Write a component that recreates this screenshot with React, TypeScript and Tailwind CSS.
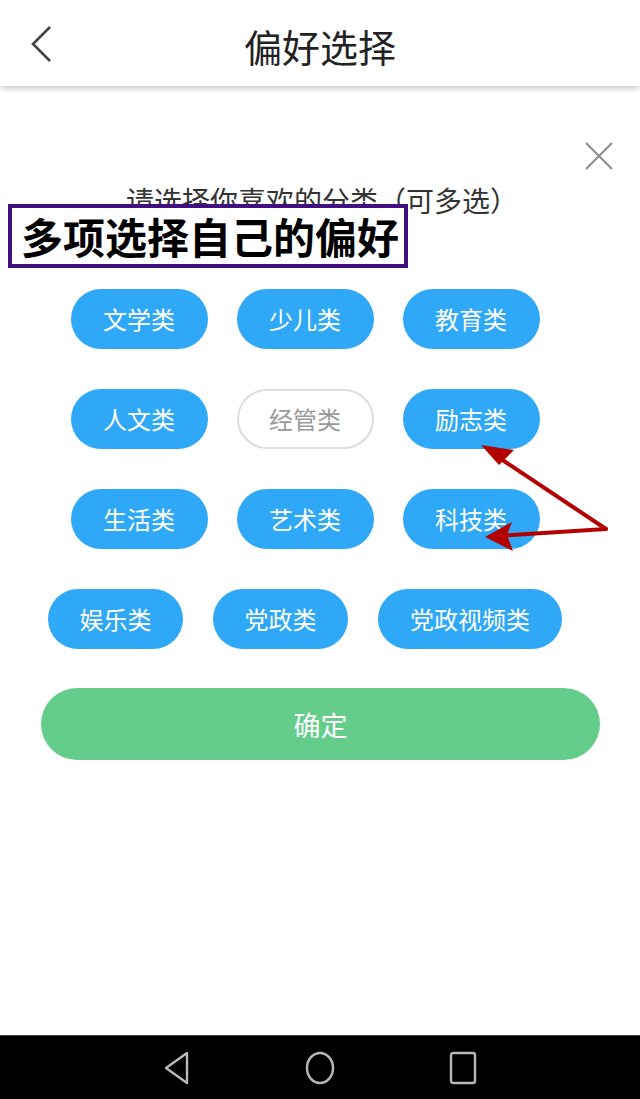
import React from "react";

const font = { fontFamily: '"Noto Sans CJK SC", "Noto Sans", sans-serif' };

function Pill({ label, off = false, w }: { label: string; off?: boolean; w: string }) {
  return (
    <div
      className={
        "h-[60px] rounded-full flex items-center justify-center text-[24px] leading-none " +
        w +
        (off
          ? " bg-white border-2 border-[#dcdcdc] text-[#9a9a9a]"
          : " bg-[#2fa8f7] text-white")
      }
    >
      {label}
    </div>
  );
}

export default function App() {
  return (
    <div className="relative w-[640px] h-[1099px] bg-white flex flex-col overflow-hidden" style={font}>
      {/* Header */}
      <div className="h-[86px] bg-white grid grid-cols-[1fr_auto_1fr] items-center shadow-[0_3px_5px_rgba(0,0,0,0.18)] z-10">
        <div className="pl-[30px] pt-[2px] flex items-center">
          <svg width="24" height="38" viewBox="0 0 24 38">
            <path d="M20 2 L3 19 L20 36" fill="none" stroke="#444" strokeWidth="2.6" />
          </svg>
        </div>
        <div className="text-[38px] leading-none text-[#222] pt-[6px]">偏好选择</div>
        <div />
      </div>

      {/* Close */}
      <div className="mt-[56px] flex justify-end pr-[27px]">
        <svg width="28" height="28" viewBox="0 0 28 28">
          <path d="M1 1 L27 27 M27 1 L1 27" stroke="#8a8a8a" strokeWidth="2" />
        </svg>
      </div>

      {/* Subtitle */}
      <div className="mt-[17px] flex justify-center pl-[4px] text-[28px] leading-[27px] text-[#333]">
        请选择你喜欢的分类（可多选）
      </div>

      {/* Options */}
      <div className="mt-[75px] flex flex-col gap-[40px] pr-[30px]">
        <div className="flex justify-center gap-[29px]">
          <Pill label="文学类" w="w-[137px]" />
          <Pill label="少儿类" w="w-[137px]" />
          <Pill label="教育类" w="w-[137px]" />
        </div>
        <div className="flex justify-center gap-[29px]">
          <Pill label="人文类" w="w-[137px]" />
          <Pill label="经管类" off w="w-[137px]" />
          <Pill label="励志类" w="w-[137px]" />
        </div>
        <div className="flex justify-center gap-[29px]">
          <Pill label="生活类" w="w-[137px]" />
          <Pill label="艺术类" w="w-[137px]" />
          <Pill label="科技类" w="w-[137px]" />
        </div>
        <div className="flex justify-center gap-[30px]">
          <Pill label="娱乐类" w="w-[135px]" />
          <Pill label="党政类" w="w-[135px]" />
          <Pill label="党政视频类" w="w-[184px]" />
        </div>
      </div>

      {/* Confirm */}
      <div className="mt-[39px] ml-[41px] mr-[40px] h-[72px] rounded-full bg-[#65cd8b] flex items-center justify-center text-white text-[27px] leading-none">
        确定
      </div>

      <div className="flex-1" />

      {/* Android nav bar */}
      <div className="h-[64px] bg-black flex items-center justify-center gap-[114px] border-t border-[#444]">
        <svg width="28" height="36" viewBox="0 0 28 36">
          <path d="M24 3 L24 33 L3 18 Z" fill="none" stroke="#b8b8b8" strokeWidth="2.4" strokeLinejoin="round" />
        </svg>
        <svg width="30" height="36" viewBox="0 0 30 36">
          <ellipse cx="15" cy="18" rx="13" ry="15" fill="none" stroke="#b8b8b8" strokeWidth="2.4" />
        </svg>
        <svg width="28" height="34" viewBox="0 0 28 34">
          <rect x="2" y="2" width="24" height="30" rx="2" fill="none" stroke="#b8b8b8" strokeWidth="2.4" />
        </svg>
      </div>

      {/* Annotation box */}
      <div className="absolute left-[8px] top-[204px] w-[400px] h-[64px] border-4 border-[#420f80] bg-white flex items-center justify-center">
        <span className="text-[42px] font-bold leading-none text-black pl-[4px]">多项选择自己的偏好</span>
      </div>

      {/* Red arrows */}
      <svg className="absolute left-0 top-0 pointer-events-none" width="640" height="1099" viewBox="0 0 640 1099">
        <path d="M606 529 L492 453" stroke="#b30000" strokeWidth="4" strokeLinecap="round" fill="none" />
        <path d="M481 445 L514 450 L499 465 Z" fill="#b30000" />
        <path d="M606 529 L496 536" stroke="#b30000" strokeWidth="4" strokeLinecap="round" fill="none" />
        <path d="M485 537 L512 522 L507 535 L513 551 Z" fill="#b30000" />
      </svg>
    </div>
  );
}
